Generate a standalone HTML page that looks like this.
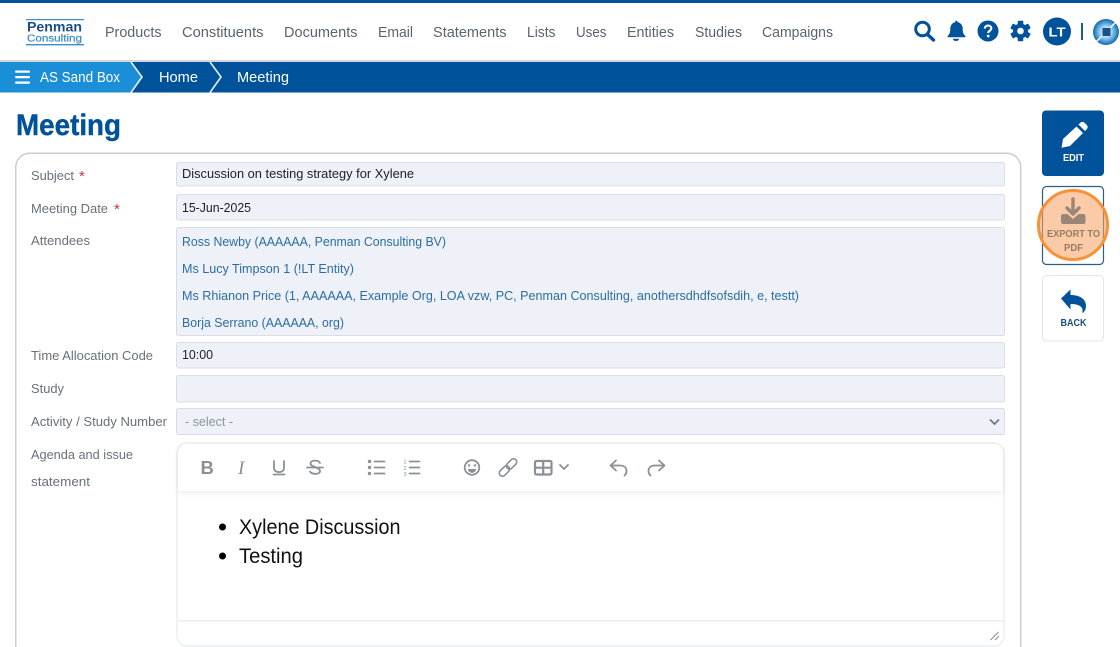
<!DOCTYPE html>
<html lang="en"><head><meta charset="utf-8"><title>Meeting</title>
<style>
html,body{margin:0;padding:0;background:#fff;width:1120px;height:647px;overflow:hidden}
svg{display:block}
text{font-family:"Liberation Sans",sans-serif}
.nav{font-size:14.5px;fill:#5a646e}
.bc{font-size:14.5px;fill:#fff}
.lb{font-size:13px;fill:#68717a}
.val{font-size:13px;fill:#1c1f22}
.att{font-size:13px;fill:#2b6da3}
.ed{font-size:21px;fill:#111}
.btn{font-size:10.5px;font-weight:bold}
.ic{fill:none;stroke:#8b9096;stroke-width:1.8;stroke-linecap:round;stroke-linejoin:round}
.f{fill:#eef1f8;stroke:#d9dde6;stroke-width:1}
</style></head><body>
<svg width="1120" height="647" viewBox="0 0 1120 647" xmlns="http://www.w3.org/2000/svg">
<defs>
<radialGradient id="g" cx="50%" cy="50%" r="52%"><stop offset="0" stop-color="#f2fafe"/><stop offset=".4" stop-color="#a9d8f0"/><stop offset=".75" stop-color="#3f97cf"/><stop offset="1" stop-color="#0d5c9e"/></radialGradient>
<filter id="sh" x="-2%" y="-30%" width="104%" height="170%"><feDropShadow dx="0" dy="2" stdDeviation="3" flood-color="#000" flood-opacity=".07"/></filter>
</defs>
<rect width="1120" height="647" fill="#fff"/>
<!-- header -->
<rect width="1120" height="3" fill="#00529b"/>
<rect y="60" width="1120" height="2" fill="#d3d7dc"/>
<!-- logo -->
<rect x="26" y="19" width="58" height="1.2" fill="#3b8fc4"/>
<text x="27" y="31.500" font-size="13.500" font-weight="bold" fill="#1c4f86" textLength="55" lengthAdjust="spacingAndGlyphs">Penman</text>
<text x="27" y="41.500" font-size="10.500" fill="#3c8fc7" stroke="#3c8fc7" stroke-width=".25" textLength="55" lengthAdjust="spacingAndGlyphs">Consulting</text>
<rect x="26" y="44" width="58" height="1.400" fill="#3b8fc4"/>
<!-- nav -->
<text class="nav" x="105" y="37" textLength="56.500" lengthAdjust="spacingAndGlyphs">Products</text>
<text class="nav" x="182" y="37" textLength="81.500" lengthAdjust="spacingAndGlyphs">Constituents</text>
<text class="nav" x="284" y="37" textLength="73.500" lengthAdjust="spacingAndGlyphs">Documents</text>
<text class="nav" x="378" y="37" textLength="35" lengthAdjust="spacingAndGlyphs">Email</text>
<text class="nav" x="433" y="37" textLength="73.500" lengthAdjust="spacingAndGlyphs">Statements</text>
<text class="nav" x="527" y="37" textLength="28.500" lengthAdjust="spacingAndGlyphs">Lists</text>
<text class="nav" x="576" y="37" textLength="30.500" lengthAdjust="spacingAndGlyphs">Uses</text>
<text class="nav" x="627" y="37" textLength="47" lengthAdjust="spacingAndGlyphs">Entities</text>
<text class="nav" x="695" y="37" textLength="47" lengthAdjust="spacingAndGlyphs">Studies</text>
<text class="nav" x="762" y="37" textLength="71" lengthAdjust="spacingAndGlyphs">Campaigns</text>
<!-- header icons -->
<circle cx="922.500" cy="29" r="6.800" fill="none" stroke="#00529b" stroke-width="3"/>
<path d="M927.500 34.500L933.500 40" stroke="#00529b" stroke-width="3.400" stroke-linecap="round"/>
<path d="M956 20.500c1 0 1.700.7 1.700 1.600 3.300.8 5 3.400 5 6.600 0 4 1 5.600 2.600 7.200.4.500.1 1.300-.6 1.300h-16.400c-.7 0-1-.8-.6-1.300 1.600-1.600 2.600-3.200 2.600-7.200 0-3.200 1.700-5.800 5-6.600 0-.9.700-1.600 1.700-1.600z" fill="#00529b"/>
<path d="M953 38.800h6c0 1.500-1.300 2.200-3 2.200s-3-.7-3-2.200z" fill="#00529b"/>
<circle cx="988" cy="31" r="10.500" fill="#00529b"/>
<path d="M984.800 28.600c0-1.900 1.400-3 3.300-3s3.200 1.100 3.200 2.800c0 2.400-3.100 2.300-3.100 4.600" fill="none" stroke="#fff" stroke-width="2.100"/>
<circle cx="988.200" cy="36" r="1.400" fill="#fff"/>
<g transform="translate(1020.500 31)" fill="#00529b">
<circle r="7.500"/>
<g><rect x="-2.800" y="-10.300" width="5.600" height="4" rx="1"/><rect x="-2.800" y="6.300" width="5.600" height="4" rx="1"/></g>
<g transform="rotate(60)"><rect x="-2.800" y="-10.300" width="5.600" height="4" rx="1"/><rect x="-2.800" y="6.300" width="5.600" height="4" rx="1"/></g>
<g transform="rotate(120)"><rect x="-2.800" y="-10.300" width="5.600" height="4" rx="1"/><rect x="-2.800" y="6.300" width="5.600" height="4" rx="1"/></g>
<circle r="3.300" fill="#fff"/>
</g>
<circle cx="1057" cy="31.500" r="14" fill="#00529b"/>
<text x="1048.500" y="36.500" font-size="13" font-weight="bold" fill="#fff" textLength="17" lengthAdjust="spacingAndGlyphs">LT</text>
<rect x="1081" y="23" width="2" height="17" fill="#1d5c92"/>
<circle cx="1106" cy="32" r="13" fill="url(#g)"/>
<path d="M1096 42L1116 22" stroke="#fff" stroke-width="1.500"/>
<rect x="1102.500" y="28" width="8" height="8" fill="#1c4f8c"/>
<!-- breadcrumb -->
<rect y="62" width="1120" height="30.500" fill="#00529b"/>
<path d="M0 62H131L142 77 131 92.500H0z" fill="#1a8fd8"/>
<path d="M131 62L142 77 131 92.500" fill="none" stroke="#e6f0f8" stroke-width="1.600"/>
<path d="M210 62L221 77 210 92.500" fill="none" stroke="#e6f0f8" stroke-width="1.600"/>
<rect x="15" y="70.500" width="15" height="2.300" rx="1" fill="#fff"/><rect x="15" y="76" width="15" height="2.300" rx="1" fill="#fff"/><rect x="15" y="81.500" width="15" height="2.300" rx="1" fill="#fff"/>
<text class="bc" x="40" y="82" textLength="80" lengthAdjust="spacingAndGlyphs">AS Sand Box</text>
<text class="bc" x="159" y="82" textLength="39" lengthAdjust="spacingAndGlyphs">Home</text>
<text class="bc" x="237" y="82" textLength="52" lengthAdjust="spacingAndGlyphs">Meeting</text>
<!-- title -->
<text x="16" y="135" font-size="30" font-weight="bold" fill="#00529b" stroke="#00529b" stroke-width=".4" textLength="105" lengthAdjust="spacingAndGlyphs">Meeting</text>
<!-- card -->
<path d="M15.750 647V167.250a14 14 0 0 1 14-14H1006.750a14 14 0 0 1 14 14V647" fill="#fff" stroke="#c9cdd5" stroke-width="1.500"/>
<!-- labels -->
<text class="lb" x="31" y="180" textLength="43" lengthAdjust="spacingAndGlyphs">Subject</text><text x="79" y="181" font-size="15" fill="#c9303e">*</text>
<text class="lb" x="31" y="213" textLength="77" lengthAdjust="spacingAndGlyphs">Meeting Date</text><text x="114" y="214" font-size="15" fill="#c9303e">*</text>
<text class="lb" x="31" y="245" textLength="59" lengthAdjust="spacingAndGlyphs">Attendees</text>
<text class="lb" x="31" y="360" textLength="122" lengthAdjust="spacingAndGlyphs">Time Allocation Code</text>
<text class="lb" x="31" y="393" textLength="33" lengthAdjust="spacingAndGlyphs">Study</text>
<text class="lb" x="31" y="426" textLength="136" lengthAdjust="spacingAndGlyphs">Activity / Study Number</text>
<text class="lb" x="31" y="459" textLength="102" lengthAdjust="spacingAndGlyphs">Agenda and issue</text>
<text class="lb" x="31" y="486" textLength="59" lengthAdjust="spacingAndGlyphs">statement</text>
<!-- fields -->
<rect class="f" x="176.500" y="162.500" width="828" height="23.500" rx="2"/>
<rect class="f" x="176.500" y="194.500" width="828" height="25.500" rx="2"/>
<rect class="f" x="176.500" y="227.500" width="828" height="108" rx="2"/>
<rect class="f" x="176.500" y="342.500" width="828" height="25.500" rx="2"/>
<rect class="f" x="176.500" y="375.500" width="828" height="26.500" rx="2"/>
<rect class="f" x="176.500" y="408.500" width="828" height="26" rx="2"/>
<text class="val" x="182" y="178" textLength="232" lengthAdjust="spacingAndGlyphs">Discussion on testing strategy for Xylene</text>
<text class="val" x="182" y="212" textLength="69" lengthAdjust="spacingAndGlyphs">15-Jun-2025</text>
<text class="att" x="182" y="246" textLength="264" lengthAdjust="spacingAndGlyphs">Ross Newby (AAAAAA, Penman Consulting BV)</text>
<text class="att" x="182" y="273" textLength="172" lengthAdjust="spacingAndGlyphs">Ms Lucy Timpson 1 (!LT Entity)</text>
<text class="att" x="182" y="300" textLength="617" lengthAdjust="spacingAndGlyphs">Ms Rhianon Price (1, AAAAAA, Example Org, LOA vzw, PC, Penman Consulting, anothersdhdfsofsdih, e, testt)</text>
<text class="att" x="182" y="327" textLength="162" lengthAdjust="spacingAndGlyphs">Borja Serrano (AAAAAA, org)</text>
<text class="val" x="182" y="359" textLength="31" lengthAdjust="spacingAndGlyphs">10:00</text>
<text x="185" y="426" font-size="13" fill="#8d949b" textLength="48" lengthAdjust="spacingAndGlyphs">- select -</text>
<path d="M990 419.500l4.500 4.500 4.500-4.500" fill="none" stroke="#6f7780" stroke-width="1.700"/>
<!-- editor -->
<path d="M187 646a10 10 0 0 1-10-10V453a10 10 0 0 1 10-10H994a10 10 0 0 1 10 10V636a10 10 0 0 1-10 10z" fill="#fff" stroke="#eceef1" stroke-width="1.500"/>
<path d="M178 491V453a9 9 0 0 1 9-9H994a9 9 0 0 1 9 9V491z" fill="#fff" filter="url(#sh)"/>
<rect x="178" y="620" width="825" height="1.500" fill="#eceef1"/>
<path d="M990.500 640l8-8M995 640l4-4" stroke="#8b9096" stroke-width="1.100"/>
<!-- toolbar -->
<text x="200.500" y="474" font-size="18.500" font-weight="bold" fill="#8b9096">B</text>
<text x="238" y="474" font-size="19" font-style="italic" fill="#8b9096" style="font-family:'Liberation Serif',serif">I</text>
<path class="ic" d="M274 461v7c0 5.500 10 5.500 10 0v-7M273.500 474.500h11"/>
<path class="ic" d="M320 463c-1-3-9-3.500-9.500.5-.4 3.500 9.500 3.500 9.500 7.500 0 4-9 3.500-10 .5M307 467.500h16"/>
<g fill="#8b9096"><circle cx="369.500" cy="461.500" r="1.700"/><circle cx="369.500" cy="467.500" r="1.700"/><circle cx="369.500" cy="473.500" r="1.700"/></g>
<path class="ic" d="M374.500 461.500h10M374.500 467.500h10M374.500 473.500h10" stroke-width="2"/>
<text x="403.500" y="464" font-size="5.500" fill="#8b9096">1</text><text x="403.500" y="470" font-size="5.500" fill="#8b9096">2</text><text x="403.500" y="476" font-size="5.500" fill="#8b9096">3</text>
<path class="ic" d="M409.500 461.500h10M409.500 467.500h10M409.500 473.500h10" stroke-width="2"/>
<circle class="ic" cx="472" cy="467.500" r="7.300"/>
<circle cx="469" cy="465.500" r="1.200" fill="#8b9096"/><circle cx="475" cy="465.500" r="1.200" fill="#8b9096"/>
<path d="M467.800 469h8.400c-.5 2.800-2.200 3.800-4.200 3.800s-3.700-1-4.200-3.800z" fill="#8b9096"/>
<g transform="translate(508 467.500) rotate(-45)" fill="none" stroke="#8b9096" stroke-width="1.600"><rect x="-11" y="-3.200" width="12" height="6.400" rx="3.200"/><rect x="-1" y="-3.200" width="12" height="6.400" rx="3.200"/></g>
<rect x="535" y="461" width="16.500" height="13.500" rx="1.500" fill="none" stroke="#8b9096" stroke-width="2.200"/>
<path d="M535 467.700h16.500M543.200 461v13.500" stroke="#8b9096" stroke-width="2.200" fill="none"/>
<path class="ic" d="M560 465l4 4 4-4" stroke-width="1.400"/>
<path class="ic" d="M616 460.500l-5.500 5 5.500 5M611 465.500h9c5 0 6.500 3 6.500 5.500 0 2-.8 3.500-2 4.500"/>
<path class="ic" d="M659 460.500l5.500 5-5.500 5M664 465.500h-9c-5 0-6.500 3-6.500 5.500 0 2 .8 3.500 2 4.500"/>
<!-- editor content -->
<circle cx="222.500" cy="527" r="3.500" fill="#000"/>
<circle cx="222.500" cy="556" r="3.500" fill="#000"/>
<text class="ed" x="239" y="534" textLength="161.500" lengthAdjust="spacingAndGlyphs">Xylene Discussion</text>
<text class="ed" x="239" y="563" textLength="64" lengthAdjust="spacingAndGlyphs">Testing</text>
<!-- edit button -->
<rect x="1042" y="110.500" width="62" height="65.500" rx="4" fill="#00529b"/>
<path d="M1078.500 124.500l6.500 6.500 1.500-1.500c1.500-1.500 1.500-3.300.2-4.600l-2.100-2.100c-1.300-1.300-3.100-1.300-4.600.2z" fill="#fff"/>
<path d="M1076.500 126.500l6.500 6.500-13 13-8.500 1.800 1.500-8.800z" fill="#fff"/>
<text class="btn" x="1063" y="161" fill="#fff" textLength="21" lengthAdjust="spacingAndGlyphs">EDIT</text>
<!-- export button -->
<rect x="1042.500" y="186.500" width="61" height="78" rx="4" fill="#fff" stroke="#2a5f87" stroke-width="1.200"/>
<path d="M1073 199v14M1067 208l6 6 6-6" fill="none" stroke="#1d5a8e" stroke-width="3.400" stroke-linecap="round" stroke-linejoin="round"/>
<path d="M1063 214h4.500l5.500 5 5.500-5h5c1.100 0 2 .9 2 2v6c0 1.100-.9 2-2 2h-20.500c-1.100 0-2-.9-2-2v-6c0-1.100.9-2 2-2z" fill="#1d5a8e"/>
<text class="btn" x="1047" y="237" fill="#14405f" textLength="53" lengthAdjust="spacingAndGlyphs">EXPORT TO</text>
<text class="btn" x="1064" y="251" fill="#14405f" textLength="19" lengthAdjust="spacingAndGlyphs">PDF</text>
<circle cx="1073" cy="225" r="34.500" fill="#f7a566" fill-opacity=".58" stroke="#f6923c" stroke-width="3"/>
<!-- back button -->
<rect x="1042.500" y="275.500" width="61" height="65.500" rx="4" fill="#fff" stroke="#e2e5e9" stroke-width="1"/>
<path d="M1061 298.500l9.500-9v5.500c8.500 0 15.500 3.500 15.500 11 0 2.800-1 4.800-2.500 6.500-.6.600-1.300.200-1.100-.5 1.200-5.200-3.500-8-11.900-8v5.500z" fill="#00529b"/>
<text class="btn" x="1060.500" y="326" fill="#1d4f78" textLength="26" lengthAdjust="spacingAndGlyphs">BACK</text>
</svg>
</body></html>
